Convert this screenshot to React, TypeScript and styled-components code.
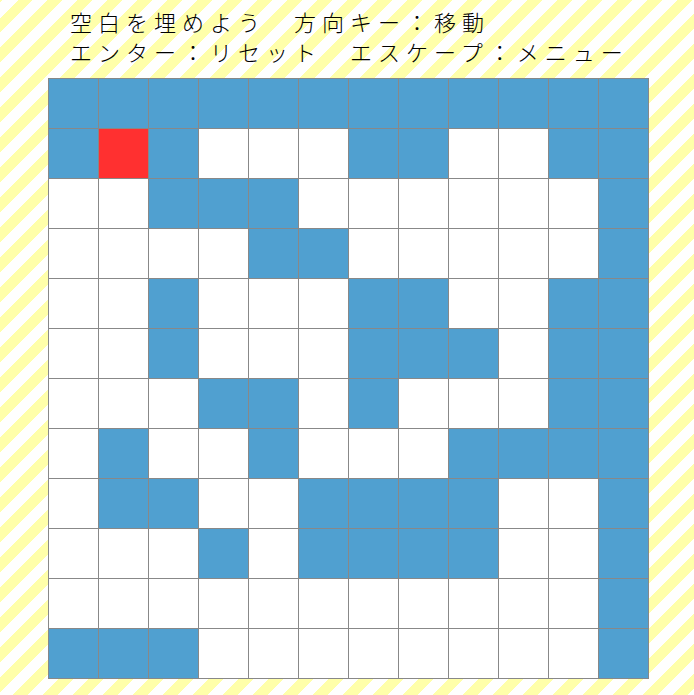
import React from "react"
import styled, { createGlobalStyle } from "styled-components"

const GlobalStyle = createGlobalStyle`
  html, body {
    margin: 0;
    padding: 0;
  }
`

// 0 = 空白, 1 = 壁, 2 = プレイヤー
const MAP = [
  "111111111111",
  "121000110011",
  "001110000001",
  "000011000001",
  "001000110011",
  "001000111011",
  "000110100011",
  "010010001111",
  "011001111001",
  "000101111001",
  "000000000001",
  "111000000001",
]

const CELL_COLORS: Record<string, string> = {
  "0": "#ffffff",
  "1": "#50a0d0",
  "2": "#ff3030",
}

const Page = styled.div`
  min-height: 100vh;
  box-sizing: border-box;
  padding: 6px 0 0 48px;
  background: repeating-linear-gradient(
    135deg,
    #ffffaa 0px,
    #ffffaa 2.12px,
    #ffffff 2.12px,
    #ffffff 12.73px,
    #ffffaa 12.73px,
    #ffffaa 21.21px
  );
`

const Help = styled.div`
  padding-left: 22px;
  font-family: "Noto Sans CJK JP", "Noto Sans", sans-serif;
  font-size: 22px;
  font-weight: 300;
  line-height: 30px;
  letter-spacing: 6px;
  color: #000;
  white-space: pre;
`

const Board = styled.div`
  margin-top: 12px;
  display: grid;
  grid-template-columns: repeat(12, 49px);
  grid-auto-rows: 49px;
  gap: 1px;
  width: max-content;
  border: 1px solid #888888;
  background: #888888;
`

const Cell = styled.div<{ $kind: string }>`
  background: ${(p) => CELL_COLORS[p.$kind]};
`

const App = () => {
  return (
    <>
      <GlobalStyle />
      <Page>
        <Help>
          <div>空白を埋めよう　方向キー：移動</div>
          <div>エンター：リセット　エスケープ：メニュー</div>
        </Help>
        <Board>
          {MAP.map((row, y) =>
            row.split("").map((c, x) => <Cell key={`${y}-${x}`} $kind={c} />)
          )}
        </Board>
      </Page>
    </>
  )
}

export default App
